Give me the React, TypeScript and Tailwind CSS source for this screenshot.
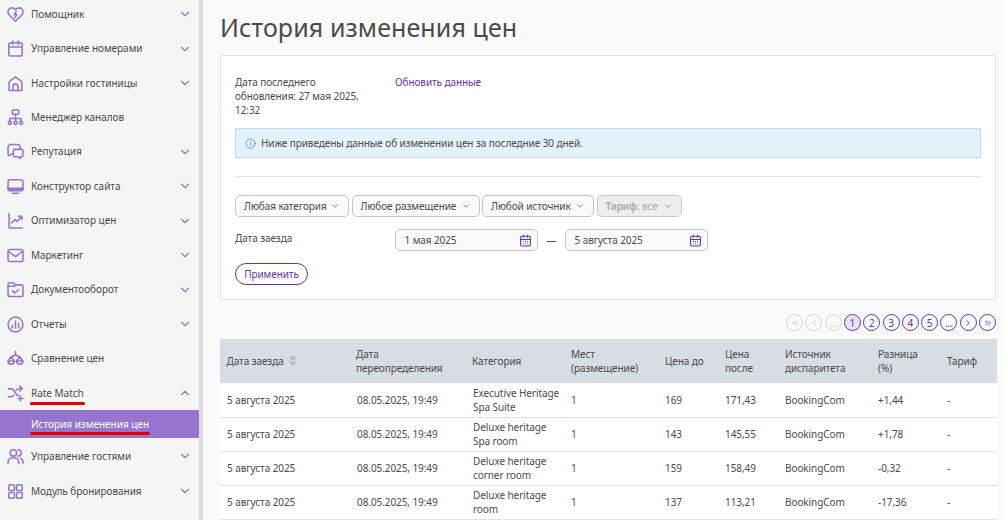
import { ChevronDown, ChevronUp, ChevronsLeft, ChevronsRight, ChevronLeft, ChevronRight, Info, CalendarDays } from 'lucide-react'
import type { ReactNode } from 'react'

const P = { fill: 'none', stroke: 'currentColor', strokeWidth: 2.2, strokeLinecap: 'round', strokeLinejoin: 'round' } as const

const Ico = ({ children }: { children: ReactNode }) => (
  <svg viewBox="0 0 24 24" width="17" height="17" {...P}>{children}</svg>
)

const icons: Record<string, ReactNode> = {
  heart: <Ico><path d="M12 21.500 3.500 13C.8 10.300.8 6.500 3 4.300 5.500 1.800 9.500 2.200 12 5.200c2.500-3 6.500-3.400 9-.9 2.200 2.200 2.200 6-.5 8.700z" /><path d="m13 7.500-3 4.500h4l-3 4.500" /></Ico>,
  calendar: <Ico><rect x="2.500" y="4" width="19" height="18.500" rx="2.500" /><path d="M2.500 10h19M8 1.500V6M16 1.500V6" /></Ico>,
  home: <Ico><path d="M3 22V10.500c0-.6.300-1.100.7-1.500L12 2.500 20.300 9c.4.400.7.900.7 1.500V22z" /><path d="M8.500 22v-6a3.500 3.500 0 0 1 7 0v6" /></Ico>,
  network: <Ico><rect x="7.500" y="1.500" width="9" height="6" rx="1" /><path d="M12 7.500V17M4 17v-3.500h16V17" /><circle cx="4" cy="19.500" r="2.200" /><circle cx="12" cy="19.500" r="2.200" /><circle cx="20" cy="19.500" r="2.200" /></Ico>,
  chat: <Ico><path d="M8 15.500H6.500L3.500 18A2 2 0 0 1 1.500 16V6a4 4 0 0 1 4-4h9a4 4 0 0 1 4 4v2.500" /><path d="M11 9h9.500a2 2 0 0 1 2 2v6.500a2 2 0 0 1-2 2H19v2.500l-3.500-2.500H11a2 2 0 0 1-2-2V11a2 2 0 0 1 2-2z" /></Ico>,
  monitor: <Ico><rect x="1.500" y="2.500" width="21" height="15.500" rx="3" /><path d="M1.500 14.500h21M1.500 16h21M7.500 21.500h9" /></Ico>,
  chart: <Ico><path d="M3 2v20.500h19" /><path d="m6.500 15.500 4.500-5 3 3 6-6.500M16 6h5v4.500" /></Ico>,
  mail: <Ico><rect x="1.500" y="3.500" width="21" height="17" rx="2.500" /><path d="m2 6 10 7.500L22 6" /></Ico>,
  folder: <Ico><path d="M1.500 19V4.500A2 2 0 0 1 3.500 2.500H9l2.500 3h9a2 2 0 0 1 2 2V20a2 2 0 0 1-2 2h-16a3 3 0 0 1-3-3z" /><path d="M1.500 7.500H11M8 14l3 3 5.500-5" /></Ico>,
  report: <Ico><circle cx="12" cy="12" r="10.500" /><path d="M7.500 13v4M12 7v10M16.500 10.500V17" /></Ico>,
  scales: <Ico><path d="M1.500 15.500h9a4.500 4.500 0 0 1-9 0zM13.500 15.500h9a4.500 4.500 0 0 1-9 0z" /><path d="M1.500 15.500 6 9.500l4.500 6M13.500 15.500 18 9.500l4.500 6M6 9.500 12 7l6 2.500M12 7V2" /></Ico>,
  shuffle: <Ico><path d="M2 5.500h4c3 0 4 2 5.500 5s3 4.500 5 4.500M2 16.500h4c1.500 0 2.500-.7 3.500-2M13 7.500c1-1.200 2.500-2.500 5-2.500h3M18 1.500 21.500 5 18 8.500M19 15.500v7M15.500 19h7" /></Ico>,
  users: <Ico><circle cx="9" cy="7" r="4.500" /><path d="M1.500 22v-2a6 6 0 0 1 6-6h3a6 6 0 0 1 6 6v2M15.500 2.500a4.500 4.500 0 0 1 0 9M19 14.500a5.500 5.500 0 0 1 3.500 5V22" /></Ico>,
  grid: <Ico><rect x="2.500" y="2.500" width="8" height="8" rx="1.500" /><rect x="13.500" y="2.500" width="8" height="8" rx="1.500" /><rect x="2.500" y="13.500" width="8" height="8" rx="1.500" /><rect x="13.500" y="13.500" width="8" height="8" rx="1.500" /></Ico>,
}

const topMenu = [
  { icon: 'heart', label: 'Помощник', arrow: true },
  { icon: 'calendar', label: 'Управление номерами', arrow: true },
  { icon: 'home', label: 'Настройки гостиницы', arrow: true },
  { icon: 'network', label: 'Менеджер каналов', arrow: false },
  { icon: 'chat', label: 'Репутация', arrow: true },
  { icon: 'monitor', label: 'Конструктор сайта', arrow: true },
  { icon: 'chart', label: 'Оптимизатор цен', arrow: true },
  { icon: 'mail', label: 'Маркетинг', arrow: true },
  { icon: 'folder', label: 'Документооборот', arrow: true },
  { icon: 'report', label: 'Отчеты', arrow: true },
  { icon: 'scales', label: 'Сравнение цен', arrow: false },
]

const rows = [
  { category: ['Executive Heritage', 'Spa Suite'], before: '169', after: '171,43', diff: '+1,44' },
  { category: ['Deluxe heritage', 'Spa room'], before: '143', after: '145,55', diff: '+1,78' },
  { category: ['Deluxe heritage', 'corner room'], before: '159', after: '158,49', diff: '-0,32' },
  { category: ['Deluxe heritage', 'room'], before: '137', after: '113,21', diff: '-17,36' },
]

function MenuItem({ icon, label, arrow, up }: { icon: string; label: string; arrow?: boolean; up?: boolean }) {
  return (
    <div className="flex items-center h-[34.45px] pl-[6.500px] pr-[7px]">
      <span className="w-[17px] h-[17px] flex text-[#9575cd] shrink-0">{icons[icon]}</span>
      <span className="ml-[7.500px] flex-1 text-[#4a4a4a] text-[10px] tracking-[-0.03px]">{label}</span>
      {arrow && (up ? <ChevronUp size={14} className="text-[#9575cd]" /> : <ChevronDown size={14} className="text-[#9575cd]" />)}
    </div>
  )
}

function Filter({ children, disabled, w }: { children: ReactNode; disabled?: boolean; w: string }) {
  return (
    <div className={`h-[22px] flex items-center justify-between pl-[8px] pr-[8px] rounded-[5px] border whitespace-nowrap ${w} ${disabled ? 'border-[#c8c8c8] bg-[#eeeeee] text-[#a8a8a8]' : 'border-[#c4c4c4] bg-[#fafafa] text-[#4a4a4a]'}`}>
      {children}
      <ChevronDown size={10} className={disabled ? 'text-[#888]' : 'text-[#777]'} />
    </div>
  )
}

function DateInput({ value, w }: { value: string; w: string }) {
  return (
    <div className={`h-[22px] flex items-center justify-between pl-[8.500px] pr-[5px] rounded-[5px] border border-[#c4c4c4] bg-[#fafafa] text-[#4a4a4a] ${w}`}>
      {value}
      <CalendarDays size={13} className="text-[#5e35b1]" />
    </div>
  )
}

function PageBtn({ children, off, active }: { children: ReactNode; off?: boolean; active?: boolean }) {
  return (
    <div className={`w-[17px] h-[17px] rounded-full border-[1.5px] flex items-center justify-center text-[10px] leading-none ${off ? 'border-[#d4d4d4] text-[#bdbdbd]' : 'border-[#5e35b1] text-[#5e35b1]'} ${active ? 'bg-[#e8e2f4]' : ''}`}>
      {children}
    </div>
  )
}

export default function App() {
  return (
    <div className="w-[1005px] h-[520px] overflow-hidden flex bg-[#fafafa] text-[10px] tracking-[-0.08px] font-['Noto_Sans','Open_Sans',sans-serif] text-[#4a4a4a]">
      {/* Sidebar */}
      <aside className="w-[203px] shrink-0 h-full bg-[#f5f5f5] border-r-[4px] border-[#dddddd]">
        <div className="-mt-[3px]">
          {topMenu.map((m) => <MenuItem key={m.label} {...m} />)}
          <MenuItem icon="shuffle" label="Rate Match" arrow up />
        </div>
        <div className="relative mb-[1px]">
          <div className="absolute left-[30px] top-[-8px] w-[55px] h-[2.500px] bg-[#e00000] rounded" />
          <div className="h-[28px] bg-[#9575cd] text-white pl-[31px] pt-[1px] flex items-center tracking-[0px]">История изменения цен</div>
          <div className="absolute left-[30px] top-[22px] w-[120px] h-[2.500px] bg-[#e00000] rounded" />
        </div>
        <MenuItem icon="users" label="Управление гостями" arrow />
        <div className="mt-[0.500px]"><MenuItem icon="grid" label="Модуль бронирования" arrow /></div>
      </aside>

      {/* Content */}
      <main className="flex-1 pl-[17px] pr-[8px] relative">
        <h1 className="text-[25px] leading-[34px] mt-[10px] text-[#4a4a4a] tracking-[0.1px]">История изменения цен</h1>

        <section className="mt-[11px] w-[776px] h-[245px] bg-white border border-[#e4e4e4] px-[14px]">
          <div className="flex pt-[19px] leading-[14px]">
            <div className="w-[160px]"><div className="w-[130px]">Дата последнего обновления: 27 мая 2025, 12:32</div></div>
            <a className="text-[#5e35b1]">Обновить данные</a>
          </div>
          <div className="mt-[11px] h-[30px] bg-[#e3f2fd] border border-[#bbdefb] flex items-center pl-[9px] gap-[5px]">
            <Info size={11} className="text-[#42a5f5]" />
            Ниже приведены данные об изменении цен за последние 30 дней.
          </div>
          <div className="mt-[18px] h-px bg-[#e2e2e2]" />
          <div className="flex gap-[2.500px] mt-[18px]">
            <Filter w="w-[114px]">Любая категория</Filter>
            <Filter w="w-[128px]">Любое размещение</Filter>
            <Filter w="w-[112px]">Любой источник</Filter>
            <Filter w="w-[85px]" disabled><span><b className="font-semibold">Тариф:</b> все</span></Filter>
          </div>
          <div className="flex items-center mt-[12px]">
            <div className="w-[160px] -mt-[4px]">Дата заезда</div>
            <DateInput value="1 мая 2025" w="w-[143px]" />
            <div className="w-[27px] text-center">—</div>
            <DateInput value="5 августа 2025" w="w-[143px]" />
          </div>
          <div className="mt-[12px] w-[73px] h-[22px] rounded-full border border-[#5e35b1] text-[#5e35b1] flex items-center justify-center">Применить</div>
        </section>

        <div className="flex justify-end gap-[2.300px] w-[776px] mt-[14px] h-[18px]">
          <PageBtn off><ChevronsLeft size={10} /></PageBtn>
          <PageBtn off><ChevronLeft size={10} /></PageBtn>
          <PageBtn off>...</PageBtn>
          <PageBtn active>1</PageBtn>
          <PageBtn>2</PageBtn>
          <PageBtn>3</PageBtn>
          <PageBtn>4</PageBtn>
          <PageBtn>5</PageBtn>
          <PageBtn>...</PageBtn>
          <PageBtn><ChevronRight size={10} /></PageBtn>
          <PageBtn><ChevronsRight size={10} /></PageBtn>
        </div>

        <table className="mt-[7px] w-[777px] table-fixed border-collapse bg-white leading-[14px]">
          <colgroup>
            <col className="w-[130px]" />
            <col className="w-[116px]" />
            <col className="w-[99px]" />
            <col className="w-[94px]" />
            <col className="w-[60px]" />
            <col className="w-[60px]" />
            <col className="w-[93px]" />
            <col className="w-[69px]" />
            <col />
          </colgroup>
          <thead>
            <tr className="h-[44px] bg-[#d8dce3] text-left">
              <th className="font-normal pl-[6.500px] pb-[1px]"><span className="inline-flex items-center gap-[5px]">Дата заезда
                <svg width="8" height="11" viewBox="0 0 8 11" className="text-[#b4b9c2]"><path d="M4 0 8 4.500H0zM4 11 0 6.500h8z" fill="currentColor" /></svg></span></th>
              <th className="font-normal pl-[6px] pb-[1px]">Дата<br />переопределения</th>
              <th className="font-normal pl-[6px] pb-[1px]">Категория</th>
              <th className="font-normal pl-[6px] pb-[1px]">Мест<br />(размещение)</th>
              <th className="font-normal pl-[6px] pb-[1px]">Цена до</th>
              <th className="font-normal pl-[6px] pb-[1px]">Цена<br />после</th>
              <th className="font-normal pl-[6px] pb-[1px]">Источник<br />диспаритета</th>
              <th className="font-normal pl-[6px] pb-[1px]">Разница<br />(%)</th>
              <th className="font-normal pl-[6px] pb-[1px]">Тариф</th>
            </tr>
          </thead>
          <tbody>
            {rows.map((r, i) => (
              <tr key={i} className="h-[34px] border-b border-[#dfe3e8]">
                <td className="pl-[7px]">5 августа 2025</td>
                <td className="pl-[7px]">08.05.2025, 19:49</td>
                <td className="pl-[7px]">{r.category[0]}<br />{r.category[1]}</td>
                <td className="pl-[6px] text-[#5e35b1]">1</td>
                <td className="pl-[6px]">{r.before}</td>
                <td className="pl-[6px]">{r.after}</td>
                <td className="pl-[6px]">BookingCom</td>
                <td className="pl-[6px]">{r.diff}</td>
                <td className="pl-[6px]">-</td>
              </tr>
            ))}
          </tbody>
        </table>
      </main>
    </div>
  )
}
